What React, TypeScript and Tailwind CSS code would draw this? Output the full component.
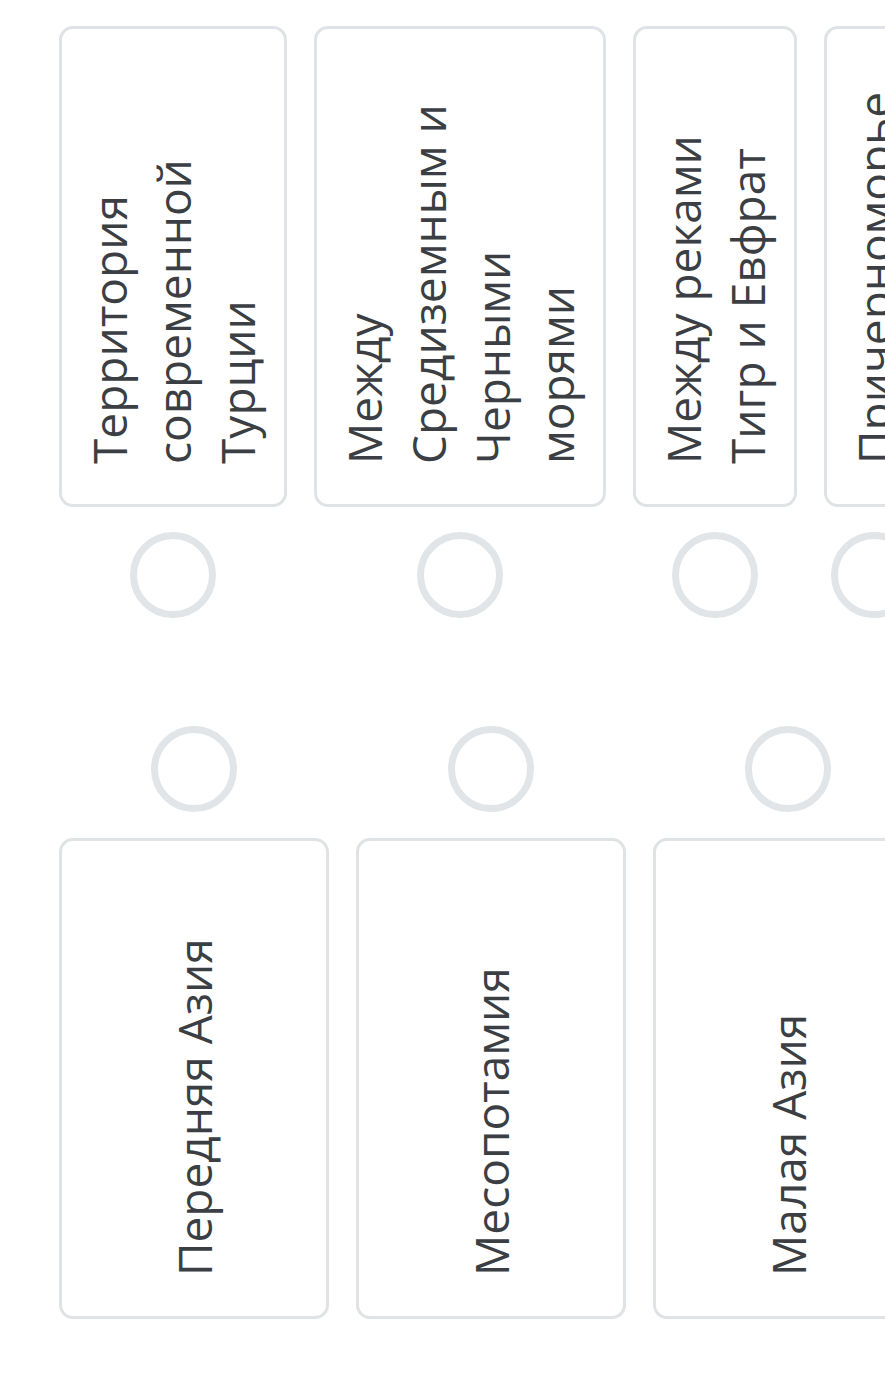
import React from 'react';

const sources = [
  'Территория современной Турции',
  'Между Средиземным и Черными морями',
  'Между реками Тигр и Евфрат',
  'Причерноморье',
];

const targets = ['Передняя Азия', 'Месопотамия', 'Малая Азия'];

function Circle() {
  return <div className="w-[86px] h-[86px] flex-none rounded-full border-[7px] border-[#e1e5e8] bg-white" />;
}

function VerticalText({ text }: { text: string }) {
  return (
    <div className="h-full [writing-mode:vertical-rl] rotate-180 text-[46px] leading-[64px] text-[#3b3f44]">
      {text}
    </div>
  );
}

export default function App() {
  return (
    <div
      className="w-[885px] h-[1392px] overflow-hidden bg-white pl-[59px] pt-[26px]"
      style={{ fontFamily: '"Open Sans", "Noto Sans", sans-serif' }}
    >
      {/* top row: cards with a circle under each */}
      <div className="flex gap-[27px] w-max">
        {sources.map((s) => (
          <div key={s} className="flex flex-col items-center gap-[25px] flex-none">
            <div className="h-[481px] flex-none rounded-[14px] border-[3px] border-[#dfe3e6] bg-white px-[15px] pt-[44px] pb-[40px]">
              <VerticalText text={s} />
            </div>
            <Circle />
          </div>
        ))}
      </div>

      {/* bottom row: circle above each card */}
      <div className="flex gap-[27px] w-max mt-[108px]">
        {targets.map((t) => (
          <div key={t} className="flex flex-col items-center gap-[26px] flex-none">
            <Circle />
            <div className="w-[270px] h-[481px] flex justify-center rounded-[14px] border-[3px] border-[#dfe3e6] bg-white pt-[44px] pb-[40px]">
              <VerticalText text={t} />
            </div>
          </div>
        ))}
      </div>
    </div>
  );
}
